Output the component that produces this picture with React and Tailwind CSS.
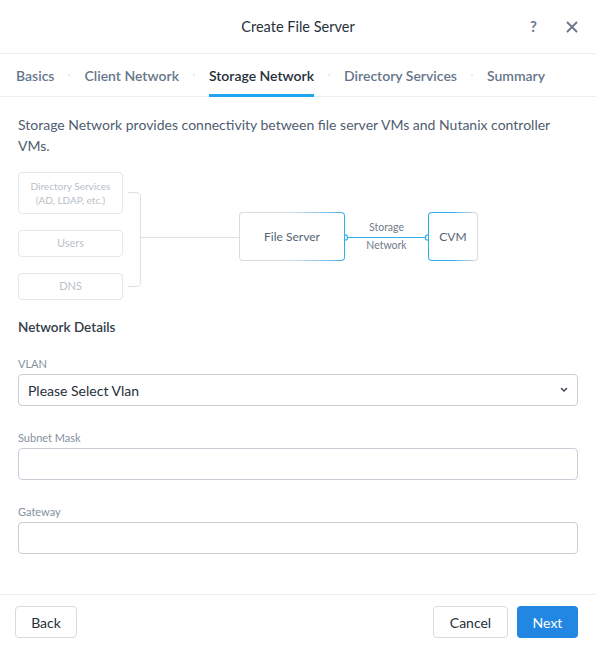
import React from 'react';

const font = { fontFamily: '"Lato", "Open Sans", sans-serif' };

const tabs = ['Basics', 'Client Network', 'Storage Network', 'Directory Services', 'Summary'];

function Field({ label, children }) {
  return (
    <div>
      <div className="text-[11px] text-[#8591a0] leading-[14px] mb-[3px]">{label}</div>
      {children}
    </div>
  );
}

function Diagram() {
  // nodes of the diagram sit on a small canvas
  return (
    <div className="relative h-[130px] w-full">
      <div className="absolute left-0 top-0 w-[105px] h-[42px] rounded-[4px] border border-[#e4e7eb] flex flex-col items-center justify-center text-[10px] leading-[14px] text-[#b9c0c8]">
        <span>Directory Services</span>
        <span>(AD, LDAP, etc.)</span>
      </div>
      <div className="absolute left-0 top-[58px] w-[105px] h-[27px] rounded-[4px] border border-[#e4e7eb] flex items-center justify-center text-[11px] text-[#b9c0c8]">
        Users
      </div>
      <div className="absolute left-0 top-[101px] w-[105px] h-[27px] rounded-[4px] border border-[#e4e7eb] flex items-center justify-center text-[11px] text-[#b9c0c8]">
        DNS
      </div>

      <svg className="absolute left-0 top-0" width="470" height="130" fill="none">
        <path d="M110 20.5 H118 Q122.5 20.5 122.5 25 V110 Q122.5 114.5 118 114.5 H110" stroke="#dde1e6" strokeWidth="1" />
        <path d="M122.5 65.5 H221" stroke="#dde1e6" strokeWidth="1" />
        <path d="M327 65.5 H410" stroke="#2eb0ea" strokeWidth="1.2" />
        <circle cx="327" cy="65.5" r="2.6" fill="#fff" stroke="#2eb0ea" strokeWidth="1.2" />
        <circle cx="410" cy="65.5" r="2.6" fill="#fff" stroke="#2eb0ea" strokeWidth="1.2" />
      </svg>

      <div className="absolute left-[221px] top-[40px] w-[106px] h-[49px] rounded-[4px] p-px bg-gradient-to-r from-[#d9dde2] via-[#d9dde2] to-[#2eb0ea]">
        <div className="w-full h-full rounded-[3px] bg-white flex items-center justify-center text-[12px] text-[#566375]">
          File Server
        </div>
      </div>

      <div className="absolute left-[327px] top-[46px] w-[83px] flex flex-col items-center text-[10.5px] leading-[18px] text-[#6f7b89]">
        <span>Storage</span>
        <span>Network</span>
      </div>

      <div className="absolute left-[410px] top-[40px] w-[50px] h-[49px] rounded-[4px] p-px bg-gradient-to-r from-[#2eb0ea] via-[#2eb0ea] to-[#d9dde2]">
        <div className="w-full h-full rounded-[3px] bg-white flex items-center justify-center text-[12px] text-[#566375]">
          CVM
        </div>
      </div>
    </div>
  );
}

export default function App() {
  return (
    <div className="w-[596px] h-[649px] bg-white flex flex-col" style={font}>
      <header className="h-[54px] shrink-0 flex items-center relative border-b border-[#ebedf0]">
        <div className="flex-1 text-center text-[14.5px] text-[#262f3a]">Create File Server</div>
        <div className="absolute right-[18px] top-0 h-full flex items-center gap-[29px] text-[#6e7a8a]">
          <span className="text-[15px] font-bold">?</span>
          <svg width="12" height="12" viewBox="0 0 12 12">
            <path d="M1.5 1.5 L10.5 10.5 M10.5 1.5 L1.5 10.5" stroke="#6e7a8a" strokeWidth="2" strokeLinecap="round" />
          </svg>
        </div>
      </header>

      <nav className="h-[43px] shrink-0 flex items-stretch pl-[16px] border-b border-[#ebedf0]">
        {tabs.map((t, i) => (
          <React.Fragment key={t}>
            {i > 0 && (
              <div className="w-[30px] flex items-center justify-center">
                <span className="w-[2px] h-[2px] rounded-full bg-[#e3e6ea]" />
              </div>
            )}
            <div
              className={`flex items-center text-[14px] font-semibold relative ${
                t === 'Storage Network' ? 'text-[#262f3a]' : 'text-[#66768a]'
              }`}
            >
              {t}
              {t === 'Storage Network' && (
                <span className="absolute left-0 right-0 bottom-[-1px] h-[3px] bg-[#22a5f0]" />
              )}
            </div>
          </React.Fragment>
        ))}
      </nav>

      <main className="flex-1 px-[18px] pt-[17px]">
        <p className="text-[14px] leading-[21px] text-[#4f5d6f]">
          Storage Network provides connectivity between file server VMs and Nutanix controller VMs.
        </p>

        <div className="mt-[16px]">
          <Diagram />
        </div>

        <h3 className="mt-[16px] text-[13.5px] font-semibold text-[#333c47] leading-[18px]">Network Details</h3>

        <div className="mt-[21px] flex flex-col gap-[25px]">
          <Field label="VLAN">
            <div className="h-[32px] rounded-[4px] border border-[#c9ced6] flex items-center justify-between px-[9px]">
              <span className="text-[14px] text-[#262f3a]">Please Select Vlan</span>
              <svg width="8" height="6" viewBox="0 0 8 6">
                <path d="M1.5 1.5 L4 4 L6.5 1.5" stroke="#3c4654" strokeWidth="1.5" fill="none" strokeLinecap="round" />
              </svg>
            </div>
          </Field>
          <Field label="Subnet Mask">
            <div className="h-[32px] rounded-[4px] border border-[#c9ced6]" />
          </Field>
          <Field label="Gateway">
            <div className="h-[32px] rounded-[4px] border border-[#c9ced6]" />
          </Field>
        </div>
      </main>

      <footer className="h-[55px] shrink-0 border-t border-[#ebedf0] flex items-start pt-[11px] px-[15px] gap-[9px]">
        <button className="h-[32px] w-[62px] rounded-[4px] border border-[#d7dbe0] text-[14px] text-[#262f3a] bg-white">
          Back
        </button>
        <div className="flex-1" />
        <button className="h-[32px] w-[75px] rounded-[4px] border border-[#d7dbe0] text-[14px] text-[#262f3a] bg-white">
          Cancel
        </button>
        <button className="h-[32px] w-[61px] mr-[3px] rounded-[4px] bg-[#2287e2] text-[14px] text-white">
          Next
        </button>
      </footer>
    </div>
  );
}
